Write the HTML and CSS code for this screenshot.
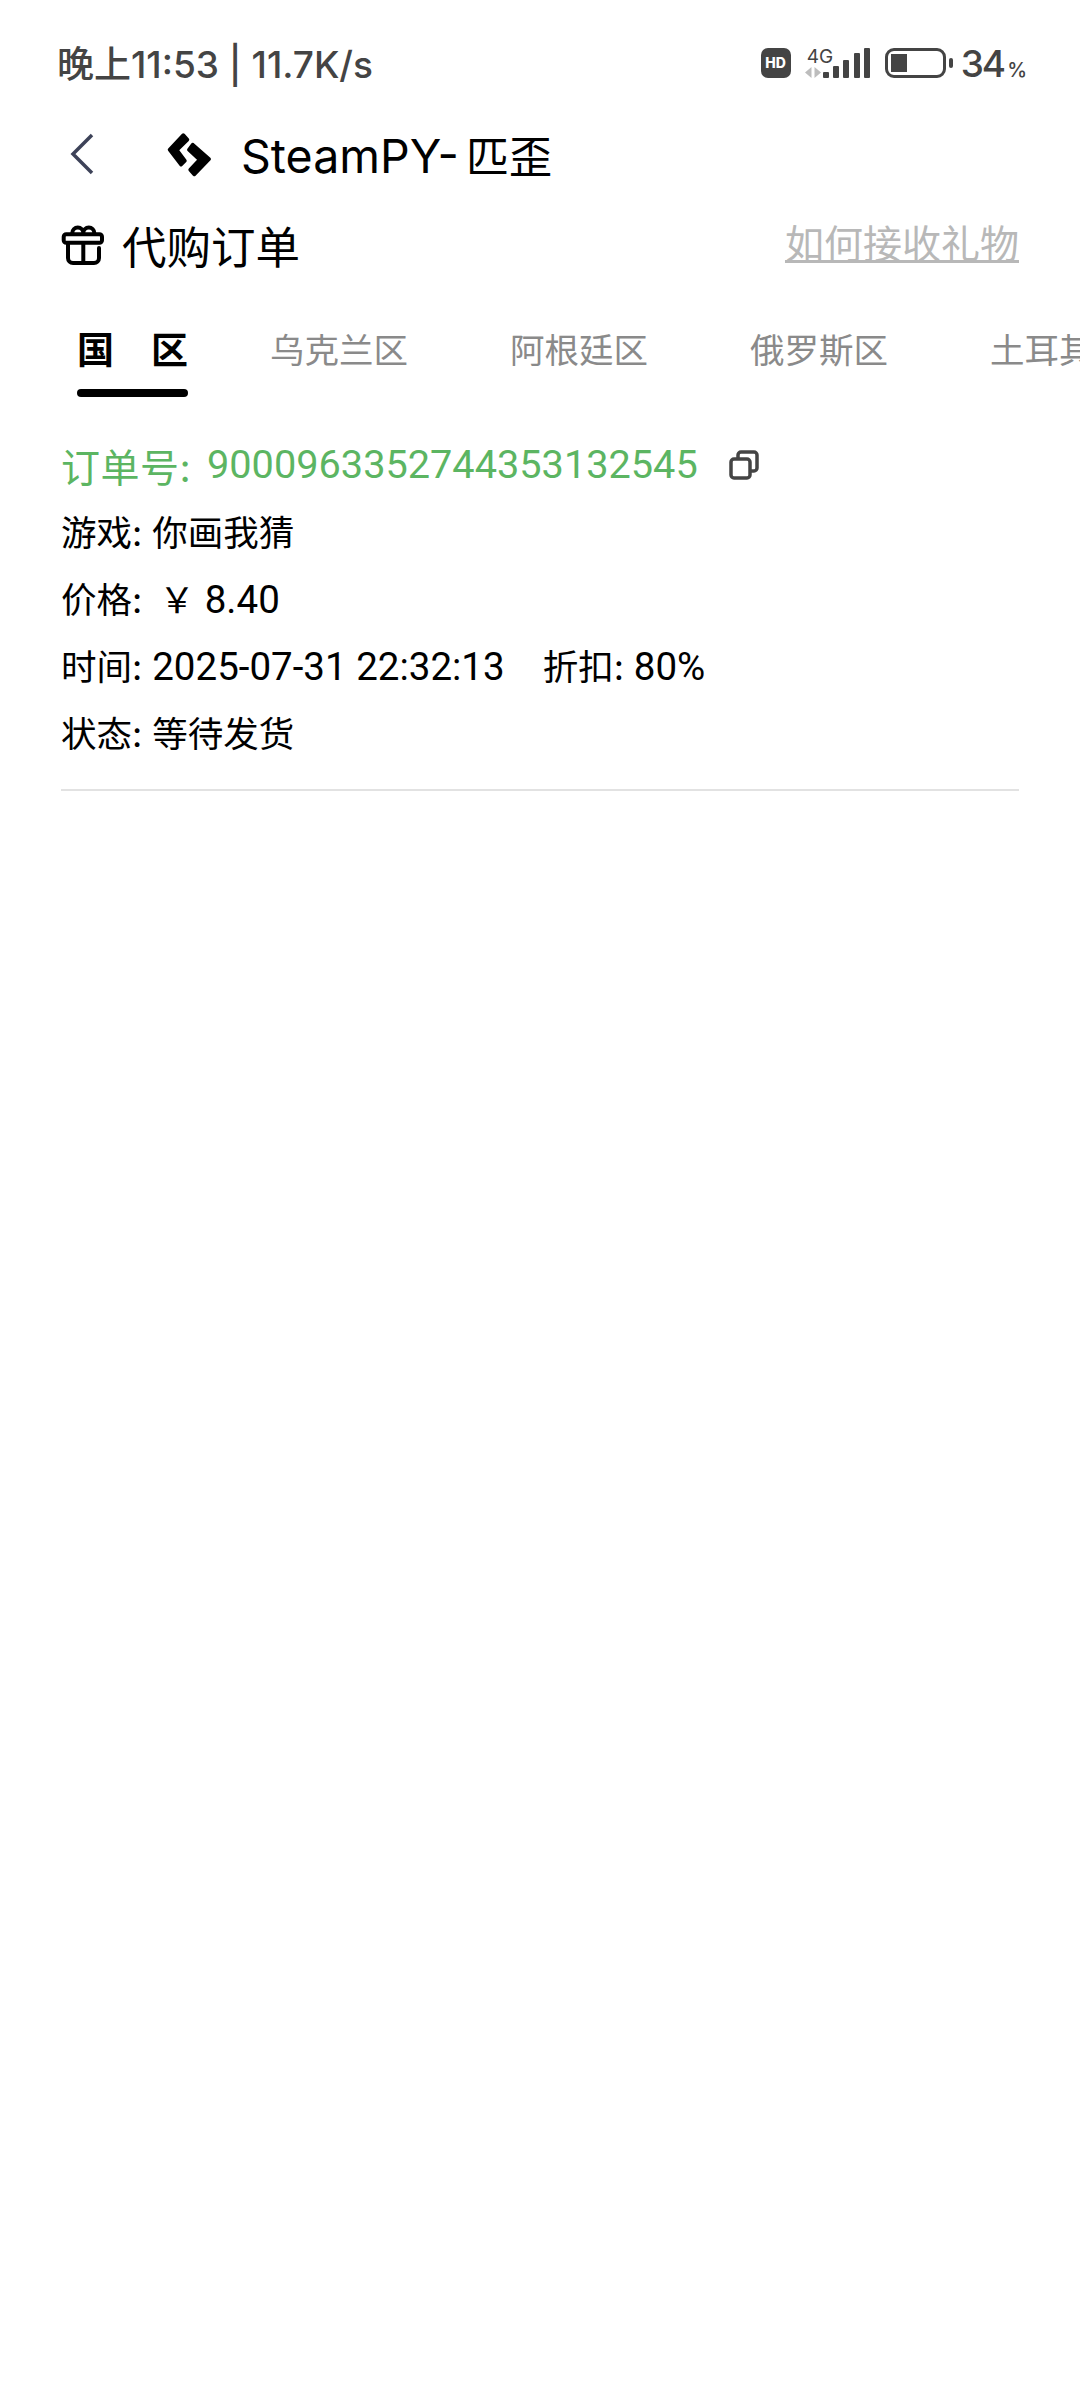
FILE: index.html
```html
<!DOCTYPE html>
<html lang="zh-CN">
<head>
  <meta charset="UTF-8">
  <meta name="viewport" content="width=device-width, initial-scale=1.0">
  <title>SteamPY-匹歪</title>
  <link rel="stylesheet" href="styles.css">
</head>
<body>
  <div class="status-bar">
    <div class="status-left">晚上11:53 | 11.7K/s</div>
    <div class="status-right">
      <span class="hd-badge">HD</span>
      <div class="network">
        <span class="network-label">4G</span>
        <svg class="network-arrows" width="18" height="11" viewBox="0 0 18 11">
          <path d="M7.500 0v11L1 5.500z M10.500 0v11L17 5.500z" fill="#bdbdbd"/>
        </svg>
      </div>
      <svg class="signal" width="47" height="30" viewBox="0 0 47 30">
        <rect x="0" y="24" width="6" height="6" rx="1" fill="#444"/>
        <rect x="10" y="18" width="6" height="12" rx="1" fill="#444"/>
        <rect x="20" y="12" width="6" height="18" rx="1" fill="#444"/>
        <rect x="31" y="5" width="6" height="25" rx="1" fill="#444"/>
        <rect x="41" y="0" width="6" height="30" rx="1" fill="#444"/>
      </svg>
      <div class="battery"><div class="battery-fill"></div></div>
      <div class="battery-text">34<small>%</small></div>
    </div>
  </div>

  <div class="nav-bar">
    <svg class="back-icon" width="26" height="44" viewBox="0 0 26 44">
      <path d="M23 3L4 22l19 19" fill="none" stroke="#3d4258" stroke-width="3.500"/>
    </svg>
    <svg class="logo" width="46" height="46" viewBox="0 0 46 46">
      <g fill="#000" stroke="#000" stroke-width="3.500" stroke-linejoin="round">
        <path d="M3.500 18.700L17.300 4l4.200 4.700L11 19l8 10.700-4 4z"/>
        <path d="M26.700 13.500L43.200 28 28.300 43.500l-4.200-4.700L33.500 28.700 22.800 18.700z"/>
      </g>
    </svg>
    <div class="nav-title">SteamPY-<span class="nav-title-cn">匹歪</span></div>
  </div>

  <div class="title-row">
    <div class="title-left">
      <svg class="gift-icon" width="44" height="42" viewBox="0 0 44 42">
        <g fill="none" stroke="#000" stroke-width="4" stroke-linejoin="round" stroke-linecap="round">
          <rect x="2.700" y="9.300" width="38.300" height="8.400" rx="2.500"/>
          <path d="M7 18v15a5 5 0 0 0 5 5h21a5 5 0 0 0 5-5V23"/>
          <path d="M22.300 18v20"/>
          <path d="M11.300 9V8a5.500 5.500 0 0 1 11 0 5.500 5.500 0 0 1 11 0v1"/>
        </g>
      </svg>
      <span class="title-text">代购订单</span>
    </div>
    <a class="help-link">如何接收礼物</a>
  </div>

  <div class="tabs">
    <div class="tab tab-active">国　区</div>
    <div class="tab">乌克兰区</div>
    <div class="tab">阿根廷区</div>
    <div class="tab">俄罗斯区</div>
    <div class="tab">土耳其区</div>
  </div>

  <div class="order">
    <div class="order-no">
      <span class="order-label">订单号:</span>
      <span class="order-digits">9000963352744353132545</span>
      <svg class="copy-icon" width="30" height="30" viewBox="0 0 30 30">
        <g fill="none" stroke="#444" stroke-width="3.500">
          <rect x="2" y="9" width="19" height="19" rx="3"/>
          <path d="M9 9V5a3 3 0 0 1 3-3h13a3 3 0 0 1 3 3v13a3 3 0 0 1-3 3h-4"/>
        </g>
      </svg>
    </div>
    <div class="order-line">游戏: 你画我猜</div>
    <div class="order-line">价格: <span class="yen">￥</span> <span class="num">8.40</span></div>
    <div class="order-line">时间: <span class="num">2025-07-31 22:32:13</span><span class="discount">折扣: <span class="num">80%</span></span></div>
    <div class="order-line">状态: 等待发货</div>
  </div>
</body>
</html>
```

FILE: styles.css
```css
body {
  margin: 0;
  width: 1080px;
  height: 2400px;
  overflow: hidden;
  background: #fff;
  color: #000;
  font-family: "Inter", "Noto Sans CJK SC", sans-serif;
}
.status-bar {
  display: flex;
  justify-content: space-between;
  align-items: center;
  height: 64px;
  padding: 31px 53px 0 57px;
  color: #444;
}
.status-left {
  margin-top: -2px;
  font-size: 37px;
  font-weight: 500;
}
.status-right {
  display: flex;
  align-items: center;
}
.hd-badge {
  width: 30px;
  height: 30px;
  margin-right: 13px;
  border-radius: 7px;
  background: #444;
  color: #fff;
  font-size: 14px;
  font-weight: 800;
  line-height: 30px;
  text-align: center;
}
.network {
  display: flex;
  flex-direction: column;
  width: 30px;
  margin-right: -11px;
}
.network-label {
  padding-left: 3px;
  font-size: 19px;
  line-height: 18px;
}
.network-arrows {
  display: block;
  margin-top: 1px;
}
.signal {
  margin-right: 15px;
}
.battery {
  position: relative;
  box-sizing: border-box;
  width: 61px;
  height: 30px;
  padding: 3px;
  margin-right: 15px;
  border: 3px solid #444;
  border-radius: 9px;
}
.battery::after {
  content: "";
  position: absolute;
  top: 7px;
  right: -10px;
  width: 4px;
  height: 10px;
  border-radius: 2px;
  background: #444;
}
.battery-fill {
  width: 16px;
  height: 100%;
  background: #444;
}
.battery-text {
  font-size: 37px;
  font-weight: 500;
  letter-spacing: -2px;
}
.battery-text small {
  margin-left: 3px;
  font-size: 20px;
  letter-spacing: 0;
}
.nav-bar {
  display: flex;
  align-items: center;
  height: 64px;
  margin-top: 27px;
  padding-left: 69px;
}
.back-icon {
  margin-right: 71px;
}
.logo {
  margin-right: 29px;
}
.nav-title {
  font-size: 46.500px;
}
.nav-title-cn {
  margin-left: 7px;
  font-size: 43px;
}
.title-row {
  display: flex;
  justify-content: space-between;
  align-items: center;
  height: 60px;
  margin-top: 28px;
  padding: 0 61px;
}
.title-left {
  display: flex;
  align-items: center;
}
.gift-icon {
  margin-top: 3px;
  margin-right: 17px;
}
.title-text {
  font-size: 44.500px;
}
.help-link {
  margin-top: -7px;
  color: #b8b8b8;
  font-size: 39px;
  text-decoration: underline;
}
.tabs {
  display: flex;
  gap: 102px;
  height: 79px;
  margin-top: 52px;
  padding-left: 77px;
  overflow: hidden;
}
.tab {
  flex-shrink: 0;
  color: #8a8a8a;
  font-size: 34.500px;
  line-height: 50px;
}
.tab-active {
  width: 111px;
  margin-right: -20px;
  color: #000;
  font-size: 37px;
  font-weight: 700;
  white-space: nowrap;
}
.tab-active::after {
  content: "";
  display: block;
  height: 8px;
  margin-top: 13px;
  border-radius: 4px;
  background: #000;
}
.order {
  margin: 0 61px;
  padding: 24px 0 21px;
  border-bottom: 2px solid #e2e2e2;
}
.order-no {
  display: flex;
  align-items: center;
  height: 71px;
  color: #5cb562;
  font-size: 39px;
}
.order-label {
  width: 146px;
  letter-spacing: 0.500px;
}
.order-digits {
  font-family: "Roboto", sans-serif;
  font-size: 39.700px;
}
.copy-icon {
  margin-left: 31px;
}
.order-line {
  height: 67px;
  font-size: 35.500px;
  line-height: 67px;
}
.num {
  font-family: "Roboto", sans-serif;
  font-size: 38.500px;
  line-height: 1;
}
.yen {
  margin-left: 7px;
}
.discount {
  margin-left: 38px;
}
```
